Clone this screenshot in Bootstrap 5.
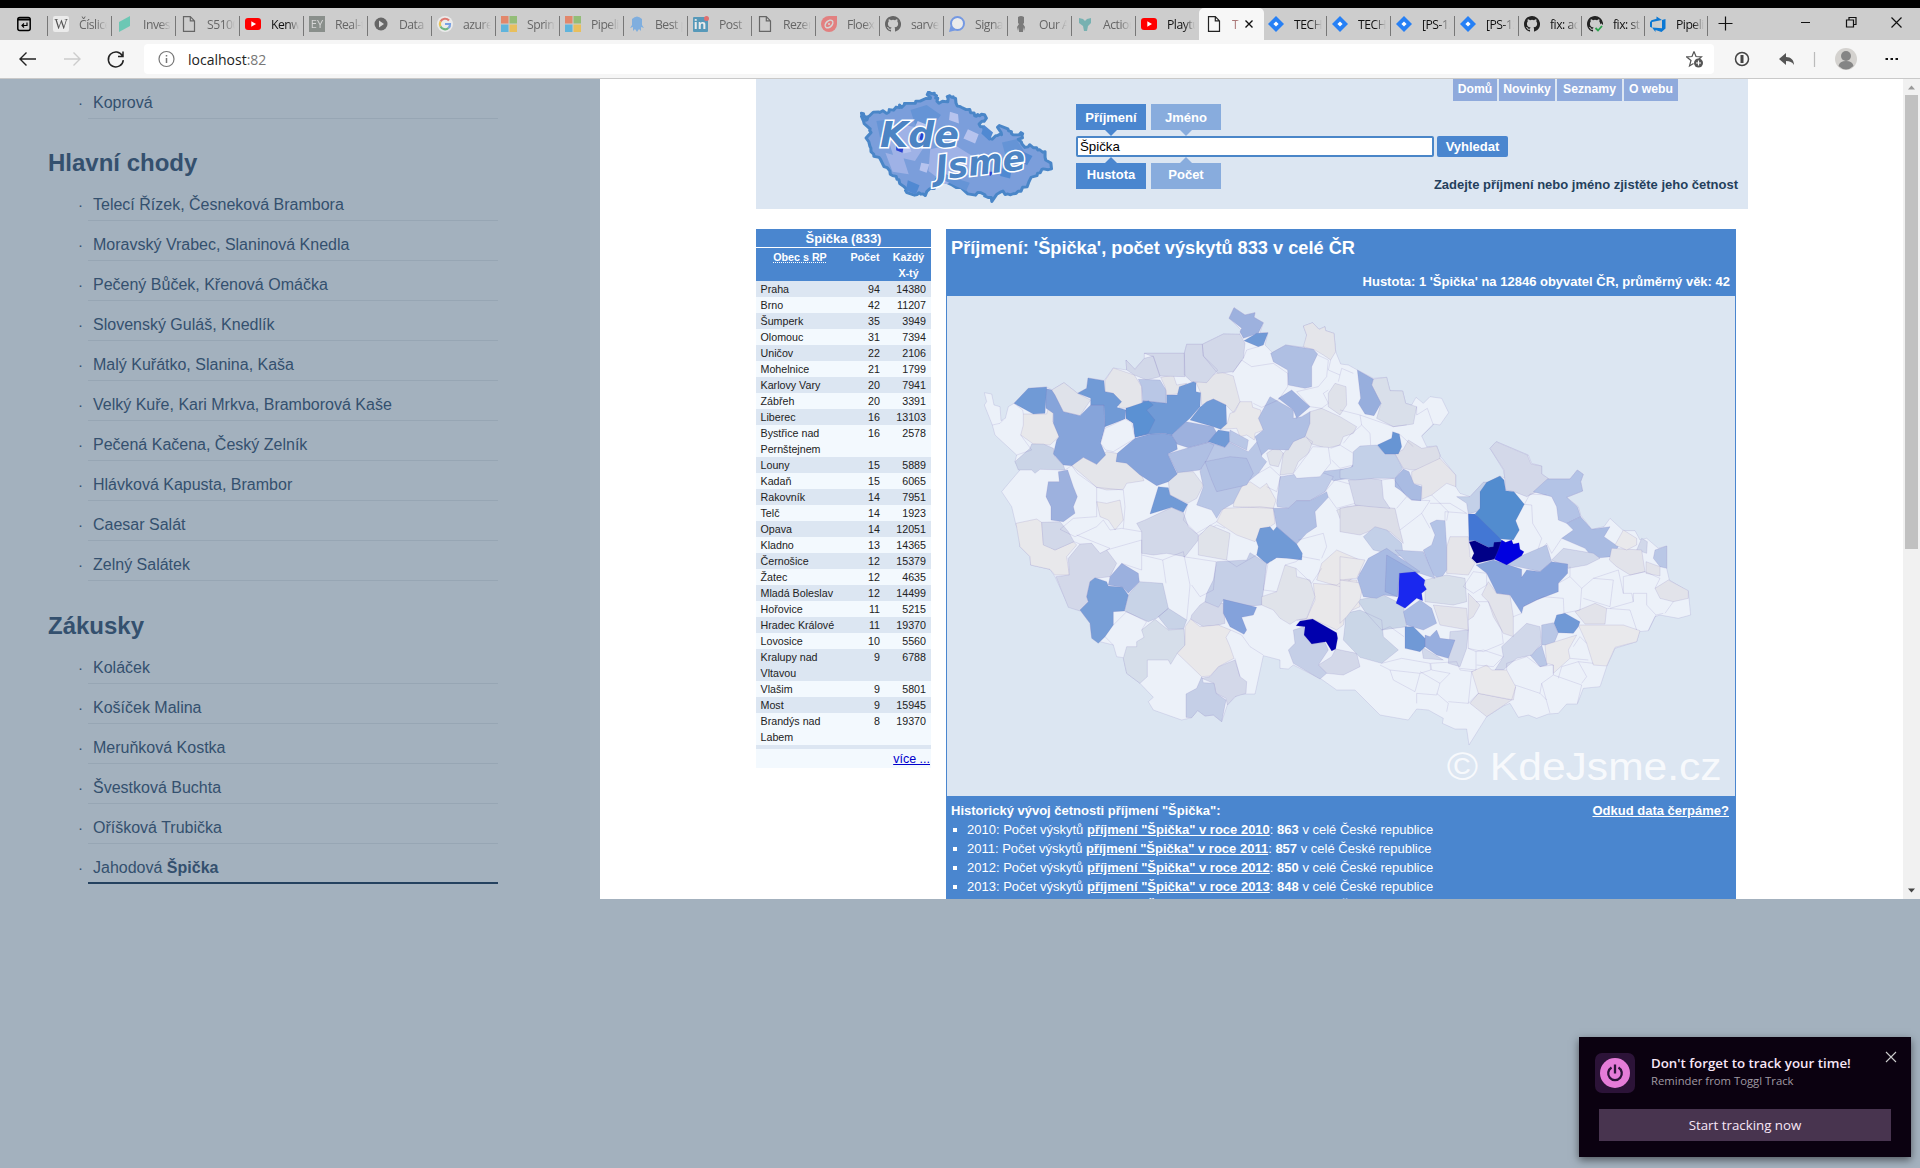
<!DOCTYPE html>
<html lang="cs">
<head>
<meta charset="utf-8">
<title>KdeJsme</title>
<link href="https://cdn.jsdelivr.net/npm/bootstrap@5.3.0/dist/css/bootstrap.min.css" rel="stylesheet">
<style>
body{width:1920px;height:1168px;overflow:hidden;background:#a3b1be;font-family:"Liberation Sans",Arial,sans-serif;font-size:13px;line-height:19px;color:#222;position:relative}
.chrome-ui{font-family:"Open Sans","Noto Sans",sans-serif}
.tabstrip{height:40px;border-top:8px solid #000;background:#cdcdcd;padding-left:47px;position:relative}
.strip-mark{position:absolute;left:17px;top:8px}
.btab{width:64px;height:32px;padding-left:6px;position:relative;flex:none;font-size:12.2px;color:#666}
.btab::before{content:"";position:absolute;left:0;top:8px;height:20px;width:1px;background:#777}
.btab svg{width:16px;height:16px;flex:none;opacity:.6}
.btab.live{color:#111}.btab.live svg{opacity:1}
.btab.slim{width:63px}
.btab span{width:28px;margin-left:10px;overflow:hidden;white-space:nowrap;letter-spacing:-.5px;-webkit-mask-image:linear-gradient(90deg,#000 60%,transparent)}
.btab.on{background:#f7f7f7;border-radius:5px 5px 0 0;width:65px;margin-right:-2px;padding-left:7px}.btab.on::before,.btab.on+.btab::before{display:none}
.btab.on span{width:8px;color:#a77;margin-left:10px}
.toolbar{height:39px;background:#f6f6f6;border-bottom:1px solid #c9c9c9;padding-top:4px}
.addr{width:1570px;height:30px;background:#fff;border-radius:4px;font-size:14px;color:#222;padding-left:14px;padding-right:10px}
.ico{display:block;flex:none;fill:none;stroke:#333;stroke-width:1.2}
.viewer{height:820px}
.menu-pane{width:600px;padding:0 102px 0 48px;color:#34506e;font-size:16px}
.menu-pane h2{font-size:24px;font-weight:700;line-height:30px;margin:29px 0 3px}
.menu-pane ul{list-style:none;margin:0;padding:0 0 0 40px}
.menu-pane li{height:40px;padding:13px 5px 0;line-height:22px;border-bottom:1px solid #97a6b4;position:relative}
.menu-pane li::before{content:"·";position:absolute;left:-10px;font-size:15px}
.menu-pane li.picked{border-bottom:2px solid #24415f}
.site{background:#fff;padding-left:156px;overflow:hidden}
.site-head{width:992px;height:130px;background:#dce6f2;padding-left:104px}
.logo-box{width:194px;margin-top:12px}
.find{width:432px;padding-top:25px;margin-left:22px}
.pick{width:70px;height:26px;line-height:27px;text-align:center;font-weight:700;color:#fff;background:#4a86cf;position:relative;margin-right:5px}
.pick.dim{background:#88acdd}
.pick.up{line-height:24px}
.pick::after{content:"";position:absolute;left:29px;border:6px solid transparent;top:26px;border-top-color:#4a86cf}
.pick.dim::after{border-top-color:#88acdd}
.pick.up::after{top:-12px;border-top-color:transparent;border-bottom-color:#4a86cf}
.pick.up.dim::after{border-top-color:transparent;border-bottom-color:#88acdd}
.q{width:358px;height:21px;border:2px solid #4a86c8;border-radius:2px;background:#fff;color:#000;line-height:17px;padding-left:2px;font-size:13.3px}
.go{width:71px;height:21px;border-radius:2px;background:#4a86cf;color:#fff;font-weight:700;line-height:21px;text-align:center;margin-left:3px}
.head-right{width:240px}
.head-right a{background:#8faadc;color:#fff;text-decoration:none;height:22px;line-height:21px;text-align:center;font-size:12.2px;font-weight:700}
.hint{font-weight:700;color:#243f5c;white-space:nowrap}
.towns{width:175px;font-size:10.7px;line-height:16px}
.towns-title{background:#4a86cf;color:#fff;font-weight:700;font-size:13px;height:19px;line-height:19px;border-bottom:1px solid #fff}
.trow{background:#f3f9fe;min-height:16px}
.trow:nth-child(odd){background:#dce6f2}
.trow>:first-child{width:87px;padding-left:4.5px}
.trow>:nth-child(2){width:37px;text-align:right}
.trow>:nth-child(3){width:46px;text-align:right}
.towns-head{background:#4a86cf;color:#fff;font-weight:700;height:33px;padding-top:1px}
.tbody-box{height:468px;overflow:hidden}
.result{width:790px;height:670px;background:#4a86cf;color:#fff;margin-left:15px;padding:0 1px;overflow:hidden}
.result h1{font-size:18.2px;font-weight:700;line-height:38px;margin:0;padding-left:4px;height:43px}
.map{display:block;width:788px;height:500px;background:#dce6f2}
.history a,.src{color:#fff;font-weight:700;text-decoration:underline}
.history li{height:19px;list-style:none;position:relative;padding-left:16px}
.history li::before{content:"";position:absolute;left:2px;top:8px;width:4px;height:4px;background:#fff}
.scroll{width:17px;background:#f1f1f1}
.thumb{width:13px;height:454px;background:#c1c1c1}
.reminder{position:absolute;left:1579px;top:1037px;width:332px;height:120px;background:#0b0110;box-shadow:0 3px 8px rgba(0,0,0,.5);padding:16px 20px 0 16px;color:#fff;border-radius:0}
.reminder .rt{font-weight:600;font-size:13.3px;line-height:20px;color:#f7e6f6;white-space:nowrap}
.reminder .rs{font-size:11.3px;line-height:16px;color:#a09aa3}
.reminder .rb{width:292px;height:32px;background:#48344f;margin:16px 0 0 4px;text-align:center;line-height:33px;font-size:13.3px;color:#f7e6f6}
.map path,.map use{stroke:#6a5cb0;stroke-opacity:.18;stroke-width:2.5}
.map .ln{fill:none}
</style>
<script src="https://cdn.jsdelivr.net/npm/bootstrap@5.3.0/dist/js/bootstrap.bundle.min.js"></script>
</head>
<body>
<svg width="0" height="0" class="position-absolute"><defs>
<symbol id="doc" viewBox="0 0 16 16"><path d="M2.500.700h6.800l4.200 4.200v10.400h-11zM9.300.700v4.200h4.200" fill="none" stroke="#222" stroke-width="1.200"/></symbol>
<symbol id="yt" viewBox="0 0 16 16"><rect y="2" width="16" height="12" rx="3" fill="#f00"/><path d="M6.300 5.300 11 8l-4.700 2.700z" fill="#fff"/></symbol>
<symbol id="ms" viewBox="0 0 16 16"><path fill="#f0592b" d="M0 0h7.500v7.500H0z"/><path fill="#6db33f" d="M8.500 0H16v7.500H8.500z"/><path fill="#19a4e6" d="M0 8.500h7.500V16H0z"/><path fill="#fbb713" d="M8.500 8.500H16V16H8.500z"/></symbol>
<symbol id="jira" viewBox="0 0 16 16"><path d="M8 0l8 8-8 8-8-8z" fill="#2680f5"/><path d="M8 5.400 10.600 8 8 10.600 5.400 8z" fill="#fff"/></symbol>
<symbol id="gh" viewBox="0 0 16 16"><path fill="#222" d="M8 0C3.580 0 0 3.580 0 8c0 3.540 2.290 6.530 5.470 7.590.4.070.55-.17.55-.38v-1.490c-2.010.37-2.530-.49-2.690-.94-.09-.23-.48-.94-.82-1.130-.28-.15-.68-.52-.01-.53.63-.01 1.080.58 1.230.82.72 1.210 1.870.87 2.330.66.07-.52.28-.87.51-1.070-1.780-.2-3.640-.89-3.640-3.950 0-.87.31-1.590.82-2.150-.08-.2-.36-1.020.08-2.120 0 0 .67-.21 2.200.82a7.600 7.600 0 0 1 4 0c1.530-1.040 2.200-.82 2.200-.82.44 1.100.16 1.920.08 2.120.51.56.82 1.270.82 2.150 0 3.070-1.870 3.750-3.650 3.950.29.25.54.73.54 1.480v2.200c0 .21.15.46.55.38A8 8 0 0 0 8 0z"/></symbol>
<path id="land" d="M133 308 155 312 162 345 180 350 183 392 196 385 205 350 222 340 265 295 320 291 336 300 372 278 413 310 440 295 444 264 492 272 520 234 560 240 558 210 583 238 613 205 613 190 733 190 740 163 787 163 850 132 900 133 903 120 880 97 867 85 882 53 915 75 945 68 942 82 970 98 960 128 984 128 975 165 997 188 1037 165 1095 172 1100 135 1090 108 1118 98 1137 118 1155 110 1157 122 1182 130 1187 185 1202 222 1225 225 1252 240 1300 265 1340 262 1350 302 1388 303 1397 340 1415 345 1428 322 1450 340 1470 320 1505 325 1526 368 1500 405 1480 402 1445 438 1460 470 1490 468 1502 500 1547 555 1547 590 1560 610 1590 620 1630 577 1645 577 1680 558 1695 565 1690 540 1650 475 1670 455 1765 495 1775 520 1805 528 1805 550 1822 567 1890 567 1912 540 1930 553 1922 575 1928 603 1880 622 1915 650 1922 675 1955 718 1992 710 2010 685 2050 722 2085 722 2100 750 2120 745 2155 775 2180 768 2180 835 2188 870 2245 905 2252 975 2215 985 2160 975 2145 980 2125 1022 2098 1025 2090 1055 2025 1075 2000 1130 1980 1190 1930 1195 1912 1242 1880 1242 1855 1270 1825 1272 1790 1285 1765 1275 1735 1282 1710 1240 1690 1248 1640 1280 1587 1365 1580 1317 1545 1317 1507 1300 1510 1285 1465 1260 1430 1257 1405 1290 1320 1275 1245 1200 1190 1200 1145 1168 1060 1125 1045 1137 1020 1135 1020 1110 970 1097 945 1212 895 1212 862 1245 845 1295 820 1275 795 1278 773 1260 755 1283 725 1290 640 1260 625 1235 640 1222 600 1180 560 1150 550 1103 530 1100 520 1065 480 1055 455 1040 450 1000 420 960 385 947 345 860 330 838 272 825 270 800 240 770 238 725 228 705 215 650 185 605 210 575 240 540 225 515 230 495 165 435 157 405 133 345 140 335z"/>
</defs></svg>

<header class="chrome-ui">
<div class="tabstrip d-flex">
<svg class="strip-mark" width="14" height="16"><rect x=".8" y="1.500" width="12.400" height="13" rx="2" fill="none" stroke="#000" stroke-width="1.500"/><path d="M1 3.500h12" stroke="#000" stroke-width="2"/><path d="M10 6.500V9.500H5m2-2-2 2 2 2" fill="none" stroke="#000" stroke-width="1.200"/></svg>
<div class="btab d-flex align-items-center"><svg viewBox="0 0 16 16"><rect width="16" height="16" rx="2" fill="#fff"/><text x="8" y="13" text-anchor="middle" font-family="Liberation Serif" font-size="14">W</text></svg><span>Číslice</span></div>
<div class="btab d-flex align-items-center"><svg viewBox="0 0 16 16"><path d="M2 6 13 0v10L2 16z" fill="#2fc4a5"/></svg><span>Invest</span></div>
<div class="btab d-flex align-items-center"><svg><use href="#doc"/></svg><span>S5100</span></div>
<div class="btab live d-flex align-items-center"><svg><use href="#yt"/></svg><span>Kenwo</span></div>
<div class="btab d-flex align-items-center"><svg viewBox="0 0 16 16"><path fill="#5d6660" d="M0 0h16v16H0z"/><text x="8" y="12" text-anchor="middle" font-size="11" fill="#ddd">EY</text></svg><span>Real-t</span></div>
<div class="btab d-flex align-items-center"><svg viewBox="0 0 16 16"><circle cx="8" cy="8" r="6.500" fill="#222"/><path d="M6 4.500 11 8l-5 3.500z" fill="#ddd"/></svg><span>Data s</span></div>
<div class="btab d-flex align-items-center"><svg viewBox="0 0 16 16"><circle cx="8" cy="8" r="8" fill="#fff"/><g fill="none" stroke-width="2.200"><path d="M12 4.500A5.200 5.200 0 0 0 3.500 5.500" stroke="#ea4335"/><path d="M3.500 5.500a5.200 5.200 0 0 0 0 5" stroke="#fbbc05"/><path d="M3.500 10.500a5.200 5.200 0 0 0 8 1.500" stroke="#34a853"/><path d="M11.500 12A5 5 0 0 0 13 8H8" stroke="#4285f4"/></g></svg><span>azure</span></div>
<div class="btab d-flex align-items-center"><svg><use href="#ms"/></svg><span>Sprint</span></div>
<div class="btab d-flex align-items-center"><svg><use href="#ms"/></svg><span>Pipeli</span></div>
<div class="btab d-flex align-items-center"><svg viewBox="0 0 16 16"><path d="M3 3q5-5 10 0v6l2 3-3-1v4l-2-2-2 3-2-3-2 2v-4l-3 1 2-3z" fill="#4c9bea"/></svg><span>Best p</span></div>
<div class="btab d-flex align-items-center"><svg viewBox="0 0 16 16"><rect y="1" width="15" height="15" rx="1" fill="#0a77ad"/><text x="7" y="13" text-anchor="middle" font-size="13" font-weight="700" fill="#fff">in</text><circle cx="13.500" cy="2.500" r="2.500" fill="#e33"/></svg><span>Post |</span></div>
<div class="btab d-flex align-items-center"><svg><use href="#doc"/></svg><span>Rezer</span></div>
<div class="btab d-flex align-items-center"><svg viewBox="0 0 16 16"><path d="M16 0v8a8 8 0 1 1-8-8z" fill="#f04e4e"/><ellipse cx="8" cy="8" rx="4.500" ry="3" transform="rotate(-45 8 8)" fill="none" stroke="#ddd" stroke-width="1.500"/><circle cx="8" cy="8" r="1" fill="#ddd"/></svg><span>Floexi</span></div>
<div class="btab d-flex align-items-center"><svg><use href="#gh"/></svg><span>sarver</span></div>
<div class="btab d-flex align-items-center"><svg viewBox="0 0 16 16"><circle cx="8.500" cy="7.500" r="6.500" fill="#fff" stroke="#3a76f0" stroke-width="2"/><path d="M0 16l1.500-6 4.500 4.500z" fill="#3a76f0"/></svg><span>Signal</span></div>
<div class="btab d-flex align-items-center"><svg viewBox="0 0 16 16"><path d="M5 1q3-2 6 0v6l-1 1 2 3-1 4-1-4v5H6v-5l-1 4-1-4 2-3-1-1z" fill="#444"/></svg><span>Our Ap</span></div>
<div class="btab d-flex align-items-center"><svg viewBox="0 0 16 16"><path d="M2 2l4 1 2 2 2-2 4-1v5l-3 3-1 5H7L6 10 2 7z" fill="#3fa0a0"/></svg><span>Action</span></div>
<div class="btab live d-flex align-items-center"><svg><use href="#yt"/></svg><span>Playtu</span></div>
<div class="btab on live d-flex align-items-center"><svg><use href="#doc"/></svg><span>T</span><svg viewBox="0 0 16 16" style="margin-left:1px"><path d="M4.500 4.500l7 7m0-7-7 7" stroke="#111" stroke-width="1.400"/></svg></div>
<div class="btab live d-flex align-items-center"><svg><use href="#jira"/></svg><span>TECH-</span></div>
<div class="btab live d-flex align-items-center"><svg><use href="#jira"/></svg><span>TECH-</span></div>
<div class="btab live d-flex align-items-center"><svg><use href="#jira"/></svg><span>[PS-12</span></div>
<div class="btab live d-flex align-items-center"><svg><use href="#jira"/></svg><span>[PS-12</span></div>
<div class="btab slim live d-flex align-items-center"><svg><use href="#gh"/></svg><span>fix: ad</span></div>
<div class="btab slim live d-flex align-items-center"><svg viewBox="0 0 16 16"><use href="#gh" width="16" height="16"/><path d="M8 11.500 11 14.500 16 9" stroke="#cdcdcd" stroke-width="5" fill="none"/><path d="M8.500 12 11 14.500 15 10" stroke="#2da44e" stroke-width="1.800" fill="none"/></svg><span>fix: st</span></div>
<div class="btab slim live d-flex align-items-center"><svg viewBox="0 0 16 16"><path d="M15.500 3v9.500L11.500 16l-6-2v2l-3.500-4.500 10 .8V4zM12 4 6.500.500V2.800L1.500 4.300 0 6.200v4.500l2 1V6z" fill="#0b78d4"/></svg><span>Pipelin</span></div>
<div class="btab" style="width:210px"><svg class="ico" style="width:200px;height:32px;opacity:1" viewBox="0 0 200 32"><path d="M5.500 15.500h14m-7-7v14M88 14.500h9M178.500 9.500l10 10m0-10-10 10" stroke="#111"/><path d="M133.500 12h7v7h-7zM136 12V9.500h7v7h-2.500" stroke="#111"/></svg></div>
</div>
<div class="toolbar d-flex">
<svg class="ico" width="144" height="30" viewBox="0 0 144 30"><path d="M36 15H20m6.500-6.500L20 15l6.500 6.500" stroke="#222" stroke-width="1.400"/><path d="M64 15h16m-6.500-6.500L80 15l-6.500 6.500" stroke="#ccc" stroke-width="1.400"/><path d="M122.500 12a7.500 7.500 0 1 0 .8 4.200M123 7.500v5h-5" stroke="#222" stroke-width="1.500"/></svg>
<div class="addr d-flex align-items-center"><svg class="ico" width="18" height="18" viewBox="0 0 18 18"><circle cx="8.500" cy="9" r="7.500" stroke="#777"/><path d="M8.500 8v5M8.500 5v1.500" stroke="#777" stroke-width="1.500"/></svg><div style="margin-left:12px">localhost<span style="color:#777">:82</span></div>
<svg class="ico ms-auto" width="18" height="18" viewBox="0 0 18 18"><path d="M8 1.500 10 6.500l5.500.300-4 3.700M8 1.500 6 6.500l-5.500.300L5 10.500 3.500 16 7.500 13.500" stroke="#555"/><circle cx="12.500" cy="13" r="4.500" fill="#555" stroke="none"/><path d="M10 13h5m-2.500-2.500v5" stroke="#fff"/></svg></div>
<svg class="ico" width="206" height="30" viewBox="0 0 206 30"><circle cx="28" cy="15" r="6.500" stroke="#444" stroke-width="1.500"/><path d="M28 11v8" stroke="#444" stroke-width="3"/><path d="M72 9v4c5 0 8 3 8 8-2-3-4-4-8-4v4l-7-6z" fill="#555" stroke="none"/><path d="M100.500 8v15" stroke="#bbb"/><circle cx="132" cy="15" r="11" fill="#d4d2cf" stroke="none"/><circle cx="132" cy="12" r="5" fill="#858585" stroke="none"/><path d="M124.500 22q1-5 7.500-5t7.500 5q-7.500 7-15 0z" fill="#858585" stroke="none"/><path d="M171.500 15h2.500m2.500 0h2.500m2.500 0h2.500" stroke="#111" stroke-width="2.200"/></svg>
</div>
</header>

<main class="viewer d-flex">
<section class="menu-pane flex-shrink-0">
<ul><li>Koprová</li></ul>
<h2>Hlavní chody</h2>
<ul><li>Telecí Řízek, Česneková Brambora</li><li>Moravský Vrabec, Slaninová Knedla</li><li>Pečený Bůček, Křenová Omáčka</li><li>Slovenský Guláš, Knedlík</li><li>Malý Kuřátko, Slanina, Kaša</li><li>Velký Kuře, Kari Mrkva, Bramborová Kaše</li><li>Pečená Kačena, Český Zelník</li><li>Hlávková Kapusta, Brambor</li><li>Caesar Salát</li><li>Zelný Salátek</li></ul>
<h2 class="pt-1" style="margin-top:26px">Zákusky</h2>
<ul><li>Koláček</li><li>Košíček Malina</li><li>Meruňková Kostka</li><li>Švestková Buchta</li><li>Oříšková Trubička</li><li class="picked">Jahodová <b>Špička</b></li></ul>
</section>

<section class="site flex-grow-1">
<div class="site-head d-flex">
<svg class="logo-box flex-shrink-0" width="194" height="112" viewBox="0 0 194 112"><g transform="translate(-10.500 -3.500) scale(.0897 .0835)"><use href="#land" fill="#7b9edb" stroke="#4a86c8" stroke-width="34" stroke-linejoin="round"/><g fill="#9fb2e6"><path d="M560 440l200 40 90 200-120 200-240-60-60-200zM900 740l260-60 240 160-60 200-260 120-200-160zM400 780l200 60 60 200-180-30z"/></g><g fill="#6594d6"><path d="M300 400l160-20 60 140-180 80zM680 270l180-60 160 120-110 160-180-50zM1000 1000l160 80 180 60-40 100-230-120zM1700 660l160-40 120 200-210 120z"/></g><g fill="#b6c3ee"><path d="M760 400l90 40-20 90-110-30zM1320 500l120 60-40 110-130-60zM800 900l90 20-30 100-80-30zM1120 290l90 30 10 110-110-40zM600 700l70 0 20 70-90 20z"/></g><g fill="#5089d2"><path d="M1500 450l100 90-40 100-90-90zM1920 760l120 60-60 110-90-60zM1690 970l120 0-20 120-110-30zM650 1110l130 60-40 110-110-50z"/></g><path fill="#2a3fd0" d="M520 680l80 50-10 50-70-30zM800 540l50 20-30 80-40-20zM1520 1010l90 0-40 50z"/></g>
<g font-family="DejaVu Sans" font-style="oblique" font-weight="700" font-size="36" fill="#4c84c4" stroke="#fff" stroke-width="3" paint-order="stroke"><text x="20" y="56" textLength="79" lengthAdjust="spacingAndGlyphs">Kde</text><text x="0" y="0" transform="translate(77 89) rotate(-7)" textLength="90" lengthAdjust="spacingAndGlyphs" font-size="34">Jsme</text></g></svg>
<div class="find flex-shrink-0">
<div class="d-flex"><div class="pick">Příjmení</div><div class="pick dim">Jméno</div></div>
<div class="d-flex" style="margin:6px 0"><div class="q">Špička</div><div class="go">Vyhledat</div></div>
<div class="d-flex"><div class="pick up">Hustota</div><div class="pick up dim">Počet</div></div>
</div>
<div class="head-right flex-shrink-0">
<div class="d-flex" style="gap:2px;margin-left:-55px"><a href="#" style="width:44px">Domů</a><a href="#" style="width:56px">Novinky</a><a href="#" style="width:65px">Seznamy</a><a href="#" style="width:54px">O webu</a></div>
<div class="hint d-flex justify-content-end" style="margin-top:74px;width:230px">Zadejte příjmení nebo jméno zjistěte jeho četnost</div>
</div>
</div>
<div class="d-flex" style="margin-top:20px">
<div class="towns flex-shrink-0">
<div class="towns-title text-center">Špička (833)</div>
<div class="towns-head d-flex text-center"><div style="width:88px;text-decoration:underline dotted">Obec s RP</div><div style="width:42px">Počet</div><div style="width:45px">Každý<br>X-tý</div></div>
<div class="tbody-box" id="towns"></div>
<div class="text-end" style="background:#f3f9fe;height:19px;line-height:20px;font-size:12.500px;color:#00c;text-decoration:underline;padding-right:1px">více ...</div>
</div>
<div class="result flex-shrink-0">
<h1>Příjmení: 'Špička', počet výskytů 833 v celé ČR</h1>
<div class="fw-bold text-end" style="height:24px;padding-right:5px">Hustota: 1 'Špička' na 12846 obyvatel ČR, průměrný věk: 42</div>
<svg class="map" viewBox="21 18 2364 1500">
<use href="#land" fill="#ecf1f9"/>
<g>
<path fill="#dfe2ea" d="M1110 365 1145 355 1200 380 1250 410 1240 430 1210 440 1200 465 1160 475 1115 462 1095 435zM1020 555 1030 490 1065 450 1095 440 1118 455 1105 490 1075 515 1060 550zM980 490 1010 470 1030 490 1015 530 990 525zM1165 310 1185 280 1218 290 1220 345 1200 375 1165 350zM685 575 715 545 760 545 790 585 770 625 743 640 690 615zM1190 660 1220 650 1260 645 1260 725 1210 710zM335 300 372 278 413 310 452 330 420 377 370 365z"/>
<path fill="#e4e5ea" d="M495 272 520 234 583 255 605 290 605 352 540 355 520 310 495 305zM662 262 700 255 710 285 740 280 712 312 680 315 675 290zM768 278 840 245 880 258 900 335 880 368 858 345 820 327 785 345 782 308zM395 527 430 502 470 523 470 505 500 485 530 490 560 520 600 545 612 572 560 580 550 598 500 600 470 592 440 565zM1100 135 1090 108 1118 98 1137 118 1155 110 1157 122 1182 130 1187 185 1172 210 1150 195 1125 180 1090 170z"/>
<path fill="#e8e8eb" d="M250 372 320 372 325 355 340 370 338 395 355 410 357 440 330 465 280 462 242 435 250 405zM870 370 885 365 900 335 935 335 938 352 962 360 970 420 945 430 943 450 920 435 900 440 890 415 842 418 842 405 862 400zM830 695 850 655 960 650 1000 655 1005 700 960 730 945 755 890 735 855 712zM885 600 905 590 930 575 960 595 980 580 1008 630 1000 655 880 650zM228 700 290 687 305 697 310 760 345 780 400 755 410 765 380 800 388 855 345 855 330 838 272 825 270 800 240 770zM470 635 500 640 540 630 550 690 525 720 505 690 480 680z"/>
<path fill="#d2d8e9" d="M787 163 850 132 900 133 915 160 910 205 880 245 833 250 790 198zM733 190 740 163 787 163 790 198 833 240 800 278 755 275 733 255zM613 190 733 190 735 260 660 258 640 200zM585 238 613 205 640 198 660 260 620 270 583 255 560 240 558 210zM305 697 360 695 385 725 402 755 345 780 310 765zM615 690 695 652 730 668 745 710 775 735 775 750 735 800 680 790 640 795 605 790 605 725 590 700z"/>
<path fill="#cad4e7" d="M225 515 270 475 275 462 310 462 340 475 345 500 370 525 375 540 300 538 285 550 275 540 235 540z"/>
<path fill="#b9c7e6" d="M805 457 855 472 868 457 925 485 955 450 970 462 965 500 980 515 955 550 905 590 880 640 845 660 830 685 815 660 770 645 790 590 780 545zM870 420 925 450 920 480 868 455zM595 268 660 270 678 300 678 340 608 332 605 290zM1140 545 1230 535 1260 500 1260 560 1180 572z"/>
<path fill="#c0cce8" d="M1010 640 1020 560 1085 550 1140 545 1180 560 1155 605 1110 632 1070 632 1045 655 1012 650z"/>
<path fill="#afbfe3" d="M683 492 745 473 805 457 822 465 800 510 780 540 712 548zM795 515 870 500 920 505 940 550 920 585 830 605 815 570zM990 320 1060 360 1060 385 1085 380 1110 365 1110 400 1095 440 1060 455 1045 480 985 478 965 495 945 440 970 420 955 385zM992 190 1037 165 1120 178 1133 192 1115 230 1115 290 1095 295 1045 285 1043 240 1000 215zM1000 655 1045 655 1070 632 1110 632 1160 605 1165 622 1125 665 1130 710 1100 730 1070 762 1010 710z"/>
<path fill="#9db1de" d="M738 395 820 410 830 428 805 457 745 473 710 462 695 435zM1015 325 1055 300 1110 350 1070 385 1060 360zM867 85 882 53 915 75 945 68 942 82 970 98 955 130 910 145 900 125 905 115zM355 545 383 540 400 590 412 620 400 650 405 670 370 695 333 690 333 650 318 620 325 575 358 575z"/>
<path fill="#86a4da" d="M315 295 335 300 345 315 370 365 420 377 452 345 492 345 495 410 482 460 497 495 470 523 430 502 395 527 370 525 340 492 350 450 357 440 340 400 340 370 318 355zM672 430 695 435 710 460 712 478 683 492 712 552 685 575 650 587 600 555 560 520 528 515 532 490 585 445 632 432z"/>
<path fill="#709ad6" d="M444 264 492 272 495 305 520 310 545 335 530 352 558 360 555 387 495 410 492 345 452 345 452 325 413 310 440 295zM558 355 605 352 608 332 680 340 680 315 712 315 718 290 760 275 768 278 768 305 782 308 780 350 750 385 738 395 695 435 672 430 632 432 585 442 580 400 558 385zM780 352 800 335 820 327 858 345 860 402 842 418 820 410 750 390zM805 455 835 420 868 425 868 455 855 472zM912 152 950 130 984 128 970 165 955 170zM222 340 265 295 320 291 315 370 280 372zM655 590 685 593 690 615 743 643 730 667 695 652 630 672zM960 715 990 710 1000 722 1010 710 1070 762 1087 790 1085 810 1040 805 1010 803 980 822 950 795 955 770 948 750z"/>
<path fill="#5b91d3" d="M558 355 625 332 640 345 620 360 645 390 625 430 585 442 580 400 558 385z"/>
<path fill="#ecf1f9" d="M495 415 555 387 575 397 585 445 520 485 497 480 482 460zM1060 550 1105 490 1118 470 1165 472 1172 520 1140 560 1070 565z"/>
<path class="ln" d="M157 405 180 400 190 390M222 340 248 360 250 372M242 435 275 480 230 495M375 540 395 527 412 550 470 592 470 680 400 685 360 718 405 740 470 710 490 690 510 720 545 715 605 725M470 592 550 600 555 650 550 715M877 250 905 210 935 230 1000 220 1043 250 1043 290 1015 330 965 352 940 340M910 205 920 180 955 170M1133 195 1165 210 1160 260 1135 290 1070 305 1110 350 1145 355 1165 340 1150 310 1165 300M1172 210 1165 240 1200 255 1195 275M1200 255 1205 235 1240 250M955 550 990 530 1022 560 1010 605 980 590M1172 475 1200 465 1240 490 1240 525 1200 535 1175 510M1155 605 1185 570 1240 585 1245 640 1190 655 1165 620M743 643 730 690 770 730 830 695M775 735 830 705 855 715"/>
</g>
<g transform="translate(0 720)">
<path fill="#d3d8e9" d="M348 140 388 135 385 85 420 42 455 40 480 70 500 60 530 100 510 140 465 145 450 155 440 200 445 215 420 243 385 232zM755 255 780 225 795 215 850 220 855 280 835 285 790 290 752 267zM785 445 810 440 835 410 885 390 900 440 920 455 918 490 885 500 862 525 858 505 828 490 822 460zM1135 405 1175 380 1187 357 1250 370 1260 410 1210 435 1160 430z"/>
<path fill="#c8d3e7" d="M565 195 598 155 668 160 685 235 650 265 625 275 553 243zM655 260 685 235 740 270 730 297 685 298z"/>
<path fill="#c5cfe7" d="M800 190 820 150 830 95 920 90 930 68 980 100 965 225 910 230 850 210 835 232 795 215zM738 492 770 475 785 440 790 458 822 460 828 490 858 510 845 575 820 555 795 558 773 542 755 563 738 562zM1060 300 1092 290 1095 320 1115 342 1155 337 1165 360 1135 405 1160 430 1140 447 1060 400 1045 360 1065 340z"/>
<path fill="#d6deea" d="M550 385 560 350 590 350 590 335 612 322 605 300 645 268 685 300 732 297 735 345 712 370 692 403 685 390 622 390 622 440 600 460 560 430z"/>
<path fill="#e9e8ea" d="M735 290 752 267 780 290 835 285 872 300 858 322 870 350 882 385 835 410 810 438 785 440 712 370 735 345zM1070 270 1100 265 1125 210 1120 160 1190 165 1215 150 1250 150 1260 230 1215 250 1210 285 1190 300 1118 267zM1145 100 1190 60 1260 90 1260 130 1200 170 1130 150z"/>
<path fill="#e0e3ea" d="M965 200 1010 185 1035 105 1068 115 1070 140 1110 150 1125 200 1100 265 1070 270 1050 283 1020 265 1000 240 965 225zM775 20 810 -15 870 10 860 90 775 75z"/>
<path fill="#9bb0de" d="M510 140 545 100 595 130 598 155 565 190 548 172 505 165z"/>
<path fill="#84a2db" d="M850 208 950 232 940 255 905 262 920 300 912 313 870 290 850 250z"/>
<path fill="#779ed7" d="M440 200 450 155 465 143 500 155 505 168 548 172 565 195 553 243 520 245 520 285 495 320 475 340 455 325 450 280 420 240 445 215z"/>
<path fill="#0000ad" d="M1068 287 1080 273 1118 267 1190 308 1193 325 1187 357 1175 363 1158 335 1115 342 1092 315 1095 290z"/>
<path class="ln" d="M520 285 560 245 620 275 605 300M495 320 520 345M402 35 420 42M410 15 510 55 500 60 605 30 605 120 545 100M605 75 668 90 678 160M668 90 730 65 750 165 740 270M730 80 828 95 820 180 780 200 755 165M860 90 890 110 950 75M985 95 970 180 1010 185M1035 105 1068 95 1087 80 1140 90M1068 115 1115 160 1145 115M1075 30 1150 10 1160 50 1145 85M872 300 905 315 930 350 970 375M885 385 900 440"/>
</g>
<g transform="translate(1200 0)">
<path fill="#d9dfea" d="M100 267 140 262 150 302 188 303 197 340 230 350 220 402 160 410 110 385 123 340 95 285z"/>
<path fill="#dcdee8" d="M165 492 190 478 205 450 245 475 290 468 300 495 300 520 260 535 215 540 190 535zM0 655 60 645 165 655 175 700 190 760 150 725 110 715 60 735 0 725z"/>
<path fill="#e5e5ea" d="M215 545 300 505 347 555 347 590 320 580 275 615 245 628 245 585 215 580zM320 770 330 740 385 740 390 800 405 820 385 855 320 850z"/>
<path fill="#d3d8e9" d="M25 570 90 565 125 570 130 625 150 655 90 650 45 645zM450 475 468 455 562 495 573 522 605 528 605 552 625 565 620 590 560 620 522 605 497 600 492 540z"/>
<path fill="#c3d0e8" d="M0 565 0 540 38 530 40 485 60 468 110 465 135 492 165 492 188 535 165 565 100 565 45 570zM70 740 105 710 140 720 185 760 190 800 100 780zM350 620 390 620 430 577 440 577 420 655 410 665 385 672 380 640z"/>
<path fill="#b3c3e6" d="M270 700 290 690 315 692 320 770 320 840 300 870 275 850 250 780 275 765 285 735zM580 605 622 567 690 567 712 540 730 553 722 575 728 603 680 622 712 650 722 680 680 700 655 690 650 650 635 620z"/>
<path fill="#a9bbe2" d="M165 565 190 537 207 545 222 582 245 590 243 632 215 630 180 600 165 590zM665 745 700 720 680 700 722 680 755 718 810 710 792 740 835 770 815 800 760 805 735 775z"/>
<path fill="#97aedd" d="M52 240 100 267 95 285 123 340 102 377 75 372 55 340 62 325z"/>
<path fill="#6795d4" d="M112 465 155 445 158 425 178 432 185 470 175 492 135 492z"/>
<path class="ln" d="M0 360 60 375 160 410 200 405M60 375 65 405 90 430 92 465M65 405 30 435 10 460M230 350 230 375 262 355 280 405 245 438M178 432 220 470M125 570 160 565 200 620 170 655M200 620 215 630 270 632 245 670 180 720M245 670 270 715M275 615 325 665 320 692M270 640 330 640 380 670M315 692 315 665 380 670M385 672 390 740M553 643 575 645 578 700 605 745 590 790 620 760 635 790 665 745M553 643 570 612 620 615"/>
</g>
<g transform="translate(1200 720)">
<path fill="#d8dfea" d="M255 150 320 135 375 145 380 215 340 225 255 215z"/>
<path fill="#cad6e7" d="M52 210 130 195 190 225 200 290 125 300 75 245zM15 285 15 250 60 240 125 270 130 320 175 360 125 400 60 382 10 330z"/>
<path fill="#b9c7e6" d="M165 60 250 65 285 145 225 125zM500 103 550 75 620 45 635 95 600 125 555 115zM605 285 640 278 655 308 640 345 605 345zM570 375 605 345 622 405 600 410zM940 85 945 60 980 48 980 115 960 110z"/>
<path fill="#d1d8ea" d="M485 350 560 280 600 290 605 340 575 375 530 385 490 420 465 420 490 380zM635 90 670 55 760 70 780 85 740 105 685 115zM330 305 385 300 380 355 360 410 325 400zM245 350 310 390 250 385zM890 60 905 25 922 35 920 70z"/>
<path fill="#e2e3ea" d="M815 55 905 60 915 125 870 135 830 110 808 90zM918 95 960 110 960 138 918 130zM945 175 985 150 1045 182 1045 205 1000 215 960 205zM705 245 765 220 800 235 795 282 735 282zM425 195 445 155 470 190 510 195 520 260 520 320 490 310 460 260 445 215zM280 225 380 235 385 300 300 285zM390 520 415 490 515 510 440 560zM385 190 420 225 400 260 385 270z"/>
<path fill="#e9e9ec" d="M825 45 850 0 890 25 890 45 860 60zM715 285 850 285 900 302 890 335 825 352 800 408 760 405 740 340zM615 345 710 315 685 360 690 385 640 430 640 405 620 400zM395 425 440 405 455 420 500 420 527 470 520 510 415 490zM0 150 70 160 60 210 20 260 0 280zM0 80 75 90 50 145 0 150z"/>
<path fill="#a9bbe3" d="M52 145 85 85 140 55 240 125 225 125 178 130 172 200 130 195 110 205 70 200zM190 245 240 210 275 235 290 280 250 300 200 285z"/>
<path fill="#97aedf" d="M140 75 235 130 178 130 172 200 135 185zM255 315 270 320 290 300 300 325 345 330 325 385 290 375 255 350z"/>
<path fill="#86a3db" d="M408 105 460 90 500 103 545 118 545 142 560 120 600 125 635 95 683 102 683 130 655 160 655 185 590 210 550 230 545 250 510 195 470 190 440 130z"/>
<path fill="#7099d6" d="M195 290 220 290 255 325 255 350 240 365 195 355zM650 255 675 250 720 275 715 290 700 310 655 308 642 280z"/>
<path fill="#1a28ef" d="M178 130 225 125 255 150 252 165 260 178 245 190 248 212 230 205 195 235 168 220 175 200z"/>
<path class="ln" d="M125 300 150 290 192 320M125 400 185 385 270 400 272 420 240 430 150 420 120 405M150 420 160 450 225 485 240 430M240 425 300 460 330 430 275 420 272 400 350 395 360 420 400 425M300 460 290 495 230 490 230 520M290 490 325 520 320 545M325 515 385 520 395 425M385 520 415 490M385 270 385 355 408 365 408 420 360 415M385 355 430 365 490 340 485 300 445 215 408 215M408 365 430 360 490 380 460 410 410 405M500 420 500 400 560 380 600 410 640 405 640 435 605 460 600 490 525 465M605 460 630 550M600 490 620 510M640 435 725 465 712 520M655 445 665 410 715 395 740 440 725 460M690 385 745 390M700 350 720 320 740 340M715 395 760 400M655 160 690 140 725 175 720 240 670 250M610 200 670 205 672 250M550 230 610 200M725 175 760 145 820 150 810 230 730 205M690 140 690 110M760 145 835 120 850 190 875 190 880 215 810 235M850 190 850 140 915 125 960 145 945 175M880 215 880 190 920 190 920 225 948 255 970 250M800 235 870 240 890 300M948 255 925 302M1000 215 975 250M545 250 520 260M370 170 400 125 440 130 440 165 400 190zM515 510 527 470"/>
</g>
<g transform="translate(1200 0)">
<path fill="#528ccf" d="M440 577 480 558 492 570 497 602 522 605 553 643 527 692 538 720 520 750 460 745 405 672 420 655 420 605z"/>
<path fill="#4377d4" d="M385 672 405 672 475 740 490 755 465 775 445 772 405 752 387 752z"/>
<path fill="#000087" d="M387 755 405 752 445 772 460 770 462 757 485 755 480 780 463 808 410 820 395 805 402 790z"/>
<path fill="#0000e0" d="M485 750 497 757 515 750 520 762 537 758 540 778 552 785 545 797 500 825 463 808 475 780z"/>
</g>
<text x="1520" y="1470" font-size="119" font-family="Liberation Sans" fill="#fff" fill-opacity=".8" textLength="825" lengthAdjust="spacingAndGlyphs">© KdeJsme.cz</text>
</svg>
<div class="history" style="padding:5px 6px 0 4px"><div class="d-flex justify-content-between fw-bold"><span>Historický vývoj četnosti příjmení "Špička":</span><a href="#" class="src">Odkud data čerpáme?</a></div><ul class="p-0 m-0" id="years"></ul></div>
</div>
</div>
</section>
<div class="scroll flex-shrink-0 d-flex flex-column align-items-center justify-content-between">
<svg width="17" height="16"><path d="M5 10.500 8.500 6.500 12 10.500z" fill="#999"/></svg><div class="thumb mb-auto"></div><svg width="17" height="17"><path d="M5 6.500 8.500 10.500 12 6.500z" fill="#444"/></svg>
</div>
</main>

<aside class="reminder chrome-ui">
<div class="d-flex"><svg width="40" height="40" class="flex-shrink-0"><rect width="40" height="40" rx="7" fill="#2c1338"/><circle cx="20" cy="20" r="15" fill="#e57cd8"/><path d="M16.500 14.500a6.800 6.800 0 1 0 7 0M20 11.500v9" fill="none" stroke="#2c1338" stroke-width="2.300"/></svg>
<div style="margin-left:16px"><div class="rt">Don't forget to track your time!</div><div class="rs">Reminder from Toggl Track</div></div>
<svg width="12" height="12" class="ms-auto flex-shrink-0" style="margin-right:-6px;margin-top:-2px"><path d="M1 1l10 10m0-10L1 11" stroke="#ccc" stroke-width="1.100"/></svg></div>
<div class="rb">Start tracking now</div>
</aside>
<script>
const towns=`Praha,94,14380
Brno,42,11207
Šumperk,35,3949
Olomouc,31,7394
Uničov,22,2106
Mohelnice,21,1799
Karlovy Vary,20,7941
Zábřeh,20,3391
Liberec,16,13103
Bystřice nad Pernštejnem,16,2578
Louny,15,5889
Kadaň,15,6065
Rakovník,14,7951
Telč,14,1923
Opava,14,12051
Kladno,13,14365
Černošice,12,15379
Žatec,12,4635
Mladá Boleslav,12,14499
Hořovice,11,5215
Hradec Králové,11,19370
Lovosice,10,5560
Kralupy nad Vltavou,9,6788
Vlašim,9,5801
Most,9,15945
Brandýs nad Labem,8,19370
Jičín,8,5890`.split("\n");
document.getElementById("towns").innerHTML=towns.map(t=>'<div class="trow d-flex">'+t.split(",").map(c=>"<div>"+c+"</div>").join("")+"</div>").join("");
document.getElementById("years").innerHTML=[[2010,863],[2011,857],[2012,850],[2013,848],[2014,845]].map(([y,n])=>`<li>${y}: Počet výskytů <a href="#">příjmení "Špička" v roce ${y}</a>: <b>${n}</b> v celé České republice</li>`).join("");
</script>
</body>
</html>
